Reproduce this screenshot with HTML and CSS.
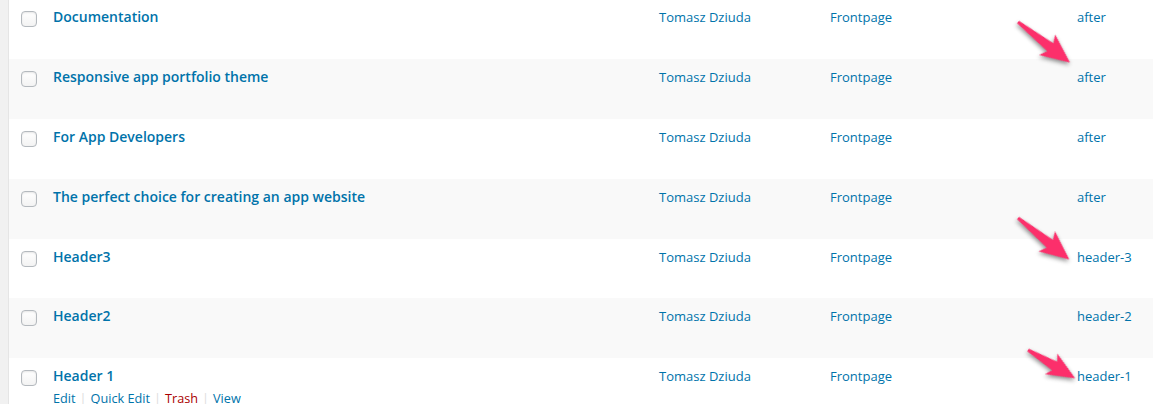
FILE: index.html
```html
<!DOCTYPE html>
<html lang="en">
<head>
    <meta charset="UTF-8">
    <title>Pages</title>
    <link rel="stylesheet" href="styles.css">
</head>
<body>
    <div class="wrap">
        <div class="list">
            <div class="row">
                <div class="cb"><input type="checkbox"></div>
                <div class="title"><a href="#">Documentation</a></div>
                <div class="col"><a href="#">Tomasz Dziuda</a></div>
                <div class="col"><a href="#">Frontpage</a></div>
                <div class="col"><a href="#">after</a></div>
            </div>
            <div class="row">
                <div class="cb"><input type="checkbox"></div>
                <div class="title"><a href="#">Responsive app portfolio theme</a></div>
                <div class="col"><a href="#">Tomasz Dziuda</a></div>
                <div class="col"><a href="#">Frontpage</a></div>
                <div class="col"><a href="#">after</a></div>
            </div>
            <div class="row">
                <div class="cb"><input type="checkbox"></div>
                <div class="title"><a href="#">For App Developers</a></div>
                <div class="col"><a href="#">Tomasz Dziuda</a></div>
                <div class="col"><a href="#">Frontpage</a></div>
                <div class="col"><a href="#">after</a></div>
            </div>
            <div class="row">
                <div class="cb"><input type="checkbox"></div>
                <div class="title"><a href="#">The perfect choice for creating an app website</a></div>
                <div class="col"><a href="#">Tomasz Dziuda</a></div>
                <div class="col"><a href="#">Frontpage</a></div>
                <div class="col"><a href="#">after</a></div>
            </div>
            <div class="row">
                <div class="cb"><input type="checkbox"></div>
                <div class="title"><a href="#">Header3</a></div>
                <div class="col"><a href="#">Tomasz Dziuda</a></div>
                <div class="col"><a href="#">Frontpage</a></div>
                <div class="col"><a href="#">header-3</a></div>
            </div>
            <div class="row">
                <div class="cb"><input type="checkbox"></div>
                <div class="title"><a href="#">Header2</a></div>
                <div class="col"><a href="#">Tomasz Dziuda</a></div>
                <div class="col"><a href="#">Frontpage</a></div>
                <div class="col"><a href="#">header-2</a></div>
            </div>
            <div class="row">
                <div class="cb"><input type="checkbox"></div>
                <div class="title">
                    <a href="#">Header 1</a>
                    <div class="row-actions">
                        <a href="#">Edit</a><span class="sep">|</span><a href="#">Quick Edit</a><span class="sep">|</span><a href="#" class="trash">Trash</a><span class="sep">|</span><a href="#">View</a>
                    </div>
                </div>
                <div class="col"><a href="#">Tomasz Dziuda</a></div>
                <div class="col"><a href="#">Frontpage</a></div>
                <div class="col"><a href="#">header-1</a></div>
            </div>
        </div>

        <!-- annotation arrows -->
        <svg class="arrow arrow-1" width="80" height="60" viewBox="0 0 80 60">
            <polygon points="0,-1.5 41,-5 37,-13 66,0 37,13 41,5 0,1.5" transform="translate(6,6) rotate(38)"/>
        </svg>
        <svg class="arrow arrow-2" width="80" height="60" viewBox="0 0 80 60">
            <polygon points="0,-1.5 41,-5 37,-13 66,0 37,13 41,5 0,1.5" transform="translate(6,6) rotate(39)"/>
        </svg>
        <svg class="arrow arrow-3" width="80" height="50" viewBox="0 0 80 50">
            <polygon points="0,-1.5 31,-5 27,-12 55,0 27,12 31,5 0,1.5" transform="translate(6,6) rotate(31)"/>
        </svg>
    </div>
</body>
</html>
```

FILE: styles.css
```css
* {
    margin: 0;
    padding: 0;
    box-sizing: border-box;
}

body {
    background: #f1f1f1;
    font-family: 'Open Sans', 'Liberation Sans', sans-serif;
    font-size: 13px;
    color: #555;
    overflow: hidden;
}

a {
    color: #0073aa;
    text-decoration: none;
}

.wrap {
    position: relative;
    padding-left: 8px;
    margin-top: -1px;
}

.list {
    background: #fff;
    border-left: 1px solid #e5e5e5;
}

.row {
    display: grid;
    grid-template-columns: 44px 606px 171px 247px 1fr;
    height: 60px;
    padding-top: 8px;
}

.row:nth-child(5) {
    height: 59px;
}

.row:nth-child(even) {
    background: #f9f9f9;
}

.cb {
    padding: 4px 0 0 12px;
}

.cb input {
    appearance: none;
    -webkit-appearance: none;
    display: block;
    width: 16px;
    height: 16px;
    border: 1px solid #b4b9be;
    border-radius: 4px;
    background: linear-gradient(#fff, #f3f3f3);
    box-shadow: inset 0 1px 2px rgba(0, 0, 0, 0.1);
}

.title {
    font-size: 14px;
    line-height: 20px;
}

.title > a {
    font-weight: 600;
}

.col {
    line-height: 20px;
}

.row-actions {
    font-size: 12.7px;
    line-height: 20px;
    padding-top: 2px;
}

.row-actions .sep {
    color: #ddd;
    margin: 0 4px;
}

.row-actions .trash {
    color: #a00;
}

.arrow {
    position: absolute;
    overflow: visible;
}

.arrow polygon {
    fill: #fc2f6b;
    filter: drop-shadow(1px 2px 2px rgba(0, 0, 0, 0.45));
}

.arrow-1 {
    left: 1012px;
    top: 17px;
}

.arrow-2 {
    left: 1012px;
    top: 213px;
}

.arrow-3 {
    left: 1022px;
    top: 345px;
}
```
